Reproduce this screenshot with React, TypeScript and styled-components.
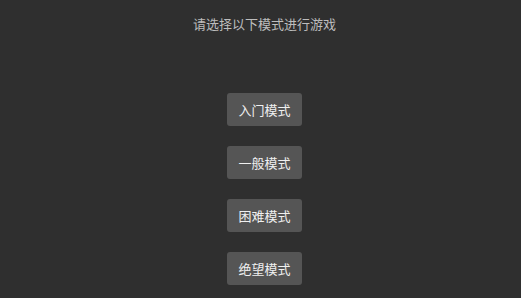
import styled, { createGlobalStyle } from 'styled-components'

const Global = createGlobalStyle`
  html, body {
    margin: 0;
    padding: 0;
    background: #2f2f2f;
  }
  body {
    font-family: "Noto Sans CJK SC", "Noto Sans", sans-serif;
  }
`

const Page = styled.div`
  min-height: 298px;
  box-sizing: border-box;
  padding: 16px 0 0 8px;
  display: flex;
  flex-direction: column;
  align-items: center;
`

const Title = styled.p`
  margin: 0;
  font-size: 13px;
  line-height: 16px;
  color: #bdbdbd;
`

const Modes = styled.div`
  margin-top: 61px;
  display: flex;
  flex-direction: column;
  align-items: center;
  gap: 20px;
`

const ModeBtn = styled.button`
  height: 33px;
  padding: 0 11px;
  border: none;
  border-radius: 3px;
  background: #555555;
  color: #f0f0f0;
  font-family: inherit;
  font-size: 13px;
  cursor: pointer;
`

const modes = ['入门模式', '一般模式', '困难模式', '绝望模式']

export default function App() {
  return (
    <>
      <Global />
      <Page>
        <Title>请选择以下模式进行游戏</Title>
        <Modes>
          {modes.map(m => (
            <ModeBtn key={m}>{m}</ModeBtn>
          ))}
        </Modes>
      </Page>
    </>
  )
}
